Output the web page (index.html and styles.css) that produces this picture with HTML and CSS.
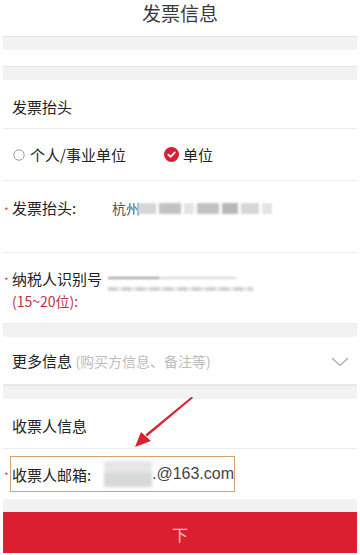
FILE: index.html
```html
<!DOCTYPE html>
<html lang="zh-CN">
<head>
	<meta charset="UTF-8">
	<title>发票信息</title>
	<link rel="stylesheet" href="styles.css">
</head>
<body>
<div class="page">
	<div class="topbar">发票信息</div>
	<div class="gap"></div>
	<div class="blank"></div>
	<div class="gap gap-top"></div>

	<div class="row head-row">发票抬头</div>

	<div class="row radio-row">
		<span class="radio">
			<svg width="12" height="12" viewBox="0 0 12 12"><circle cx="6" cy="6" r="5.2" fill="none" stroke="#9a9a9a" stroke-width="1"/></svg>
			个人/事业单位
		</span>
		<span class="radio radio-on">
			<svg width="15" height="15" viewBox="0 0 15 15"><circle cx="7.5" cy="7.5" r="7.5" fill="#d42035"/><path d="M4.3 7.6 L6.6 9.8 L10.8 5.4" fill="none" stroke="#fff" stroke-width="1.8" stroke-linecap="round" stroke-linejoin="round"/></svg>
			单位
		</span>
	</div>

	<div class="row field-row title-field">
		<span class="star">*</span>
		<span class="label">发票抬头:</span>
		<span class="value">杭州<span class="blur">
			<i class="b1"></i><i class="b2"></i><i class="b3"></i><i class="b2"></i><i class="b4"></i><i class="b1"></i><i class="b3"></i>
		</span></span>
	</div>

	<div class="row field-row tax-field">
		<span class="star">*</span>
		<span class="label">纳税人识别号<br><em>(15~20位):</em></span>
		<span class="tax-blur">
			<i class="t1"></i>
			<i class="t2"></i>
		</span>
	</div>

	<div class="gap"></div>

	<div class="row more-row">
		<span>更多信息 <small>(购买方信息、备注等)</small></span>
		<svg class="chevron" width="18" height="10" viewBox="0 0 18 10"><path d="M1 1 L9 8.5 L17 1" fill="none" stroke="#a8a8a8" stroke-width="1.2"/></svg>
	</div>

	<div class="gap gap-top"></div>

	<div class="row head-row receiver-head">收票人信息</div>

	<div class="row mail-row">
		<span class="star">*</span>
		<div class="mark">
			<span class="label">收票人邮箱:</span>
			<span class="mail-blur"></span>
			<span class="mail">.@163.com</span>
		</div>
	</div>

	<div class="gap"></div>

	<div class="submit">下</div>

	<svg class="arrow" width="80" height="60" viewBox="0 0 80 60">
		<path d="M68 1 L22 39.5 L20.5 37.6 L66.6 -0.4 Z" fill="#d8232f"/>
		<path d="M10 50 L16 35 L26 44 Z" fill="#d8232f"/>
	</svg>
</div>
</body>
</html>
```

FILE: styles.css
```css
body {
	margin: 0;
	background: #fff;
	font-family: "Noto Sans CJK SC", "Liberation Sans", sans-serif;
	color: #222;
}

.page {
	position: relative;
	width: 354px;
	height: 555px;
	margin: 0 auto;
	overflow: hidden;
}

.topbar {
	height: 36px;
	line-height: 26px;
	text-align: center;
	font-size: 19px;
	color: #3a3a3a;
	border-bottom: 1px solid #e2e2e2;
}

.gap {
	height: 13px;
	background: #f2f2f2;
}

.gap-top {
	border-top: 1px solid #e4e4e4;
}

.blank {
	height: 16px;
}

.row {
	display: flex;
	align-items: center;
	padding-left: 9px;
	font-size: 15px;
	border-bottom: 1px solid #ececec;
	box-sizing: border-box;
}

.head-row {
	height: 49px;
	padding-top: 5px;
}

.radio-row {
	height: 52px;
	gap: 38px;
	padding-left: 10px;
}

.radio {
	display: flex;
	align-items: center;
	gap: 5px;
}

.radio-on {
	gap: 4px;
}

.field-row {
	align-items: flex-start;
	padding-left: 1px;
}

.star {
	color: #d0505e;
	font-size: 10px;
	width: 8px;
	line-height: 20px;
	padding-top: 3px;
}

.title-field {
	height: 72px;
	padding-top: 17px;
}

.title-field .label {
	width: 100px;
	line-height: 20px;
}

.value {
	display: flex;
	align-items: center;
	font-size: 14px;
	color: #555;
	line-height: 20px;
}

.blur {
	display: flex;
	align-items: center;
	height: 16px;
	margin-left: -2px;
	filter: blur(1px);
}

.blur i {
	display: block;
	height: 11px;
	margin-right: 3px;
}

.b1 { width: 18px; background: #d6d6d6; }
.b2 { width: 22px; background: #c2c2c2; }
.b3 { width: 10px; background: #e4e4e4; }
.b4 { width: 16px; background: #b8b8b8; }

.tax-field {
	height: 71px;
	padding-top: 15px;
}

.tax-field .label {
	width: 96px;
	line-height: 22px;
}

.tax-field em {
	font-style: normal;
	color: #b8344c;
	font-size: 14px;
}

.tax-blur {
	display: flex;
	flex-direction: column;
	gap: 8px;
	padding-top: 9px;
	filter: blur(0.8px);
}

.tax-blur i {
	display: block;
	height: 4px;
}

.t1 { width: 128px; background: linear-gradient(90deg, #9a9a9a 0 40%, #d4d4d4 40% 100%); height: 2px !important; }
.t2 { width: 145px; background: repeating-linear-gradient(90deg, #d0d0d0 0 9px, #e8e8e8 9px 14px); }

.more-row {
	height: 48px;
	justify-content: space-between;
	padding-right: 8px;
}

.more-row small {
	font-size: 14px;
	color: #bdbdbd;
}

.chevron {
	margin-top: 2px;
}

.receiver-head {
	height: 50px;
	padding-top: 3px;
}

.mail-row {
	height: 50px;
	padding-left: 1px;
	border-bottom: none;
}

.mail-row .star {
	line-height: 30px;
	width: 6px;
}

.mark {
	display: flex;
	align-items: center;
	width: 225px;
	height: 36px;
	border: 1.5px solid #d5a173;
	box-sizing: border-box;
}

.mark .label {
	width: 92px;
	padding-left: 1px;
}

.mail-blur {
	width: 48px;
	height: 26px;
	background: linear-gradient(#e6e6e6 0 45%, #d8d8d8 45% 100%);
	filter: blur(1.5px);
}

.mail {
	font-size: 16px;
	color: #444;
	font-family: "Liberation Sans", sans-serif;
}

.submit {
	height: 41px;
	background: #dc1f30;
	color: #f4c8cc;
	text-align: center;
	line-height: 44px;
	font-size: 16px;
}

.arrow {
	position: absolute;
	left: 122px;
	top: 397px;
}
```
